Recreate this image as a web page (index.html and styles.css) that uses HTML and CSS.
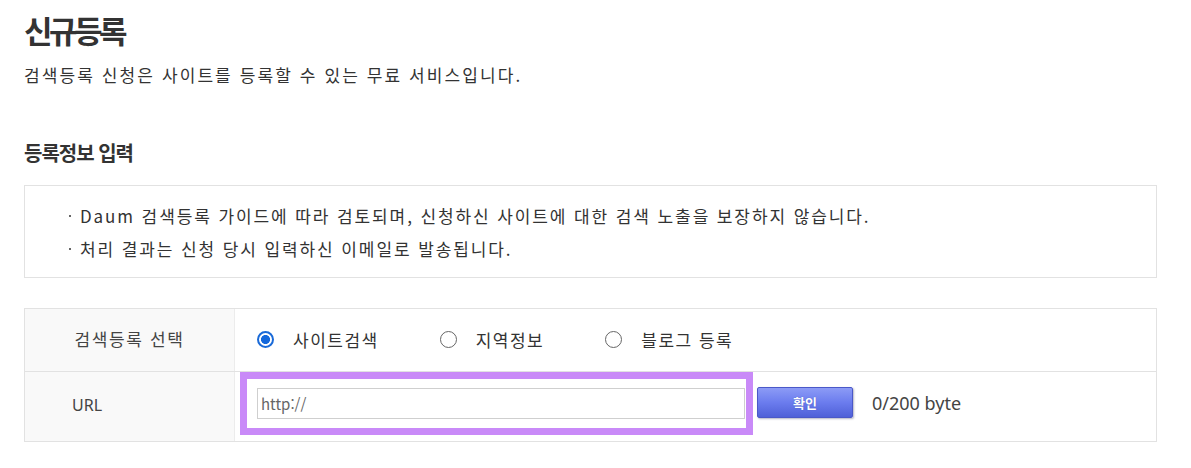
FILE: index.html
```html
<!DOCTYPE html>
<html lang="ko">
<head>
<meta charset="utf-8">
<title>신규등록</title>
<link rel="stylesheet" href="styles.css">
</head>
<body>
<div class="page">
  <h1 class="title">신규등록</h1>
  <p class="desc">검색등록 신청은 사이트를 등록할 수 있는 무료 서비스입니다.</p>
  <h2 class="section-title">등록정보 입력</h2>
  <ul class="notice">
    <li>Daum 검색등록 가이드에 따라 검토되며, 신청하신 사이트에 대한 검색 노출을 보장하지 않습니다.</li>
    <li>처리 결과는 신청 당시 입력하신 이메일로 발송됩니다.</li>
  </ul>
  <div class="form-table">
    <div class="row row-type">
      <div class="th th-center">검색등록 선택</div>
      <div class="td radios">
        <label class="opt"><span class="radio checked"></span><span class="opt-text">사이트검색</span></label>
        <label class="opt"><span class="radio"></span><span class="opt-text">지역정보</span></label>
        <label class="opt"><span class="radio"></span><span class="opt-text">블로그 등록</span></label>
      </div>
    </div>
    <div class="row row-url">
      <div class="th th-url">URL</div>
      <div class="td url-cell">
        <input class="url-input" type="text" value="http://">
        <button class="btn" type="button">확인</button>
        <span class="count">0/200 byte</span>
        <span class="highlight"></span>
      </div>
    </div>
  </div>
</div>
</body>
</html>
```

FILE: styles.css
```css
* { box-sizing: border-box; }

body {
  margin: 0;
  background: #fff;
  color: #333;
  font-family: "Noto Sans CJK KR", "Noto Sans", sans-serif;
}

.page {
  width: 1133px;
  margin-left: 24px;
}

.title {
  margin: 0;
  padding-top: 10px;
  font-size: 31px;
  line-height: 40px;
  font-weight: 700;
  letter-spacing: -3.5px;
  color: #333;
}

.desc {
  margin: 13px 0 0;
  font-size: 17px;
  line-height: 24px;
  letter-spacing: 2.1px;
  color: #333;
}

.section-title {
  margin: 53px 0 0;
  font-size: 20px;
  line-height: 26px;
  font-weight: 700;
  letter-spacing: -1px;
  color: #333;
}

.notice {
  list-style: none;
  margin: 19px 0 0;
  padding: 13px 0 12px;
  border: 1px solid #e2e2e2;
}

.notice li {
  display: flex;
  align-items: center;
  font-size: 17px;
  line-height: 33px;
  letter-spacing: 1.9px;
  color: #333;
}

.notice li::before {
  content: "";
  width: 2px;
  height: 2px;
  background: #666;
  margin-left: 44px;
  margin-right: 9px;
  flex: none;
}

.form-table {
  margin-top: 30px;
  border: 1px solid #e2e2e2;
}

.row {
  display: grid;
  grid-template-columns: 210px 1fr;
}

.row-type {
  height: 63px;
  border-bottom: 1px solid #e2e2e2;
}

.row-url {
  height: 69px;
}

.th {
  background: #f9f9f9;
  border-right: 1px solid #ececec;
  display: flex;
  align-items: center;
  font-size: 17px;
  letter-spacing: 1.6px;
  color: #444;
}

.th-center {
  justify-content: center;
  padding-bottom: 3px;
}

.th-url {
  padding-left: 47px;
  letter-spacing: 0;
  font-size: 16px;
  font-family: "Noto Sans", sans-serif;
  padding-bottom: 4px;
}

.td {
  display: flex;
  align-items: center;
  padding-left: 22px;
}

.radios {
  padding-bottom: 2px;
}

.opt {
  display: flex;
  align-items: center;
  margin-right: 61px;
}

.radio {
  width: 17px;
  height: 17px;
  border: 1px solid #666;
  border-radius: 50%;
  background: #fff;
  flex: none;
}

.radio.checked {
  border: 2px solid #1a6ad8;
  background: radial-gradient(circle, #1468dc 0 4.2px, #fff 4.8px);
}

.opt-text {
  margin-left: 19px;
  font-size: 17px;
  letter-spacing: 1.5px;
  color: #333;
}

.url-cell {
  position: relative;
  padding-bottom: 6px;
}

.url-input {
  width: 488px;
  height: 31px;
  border: 1px solid #cfcfcf;
  padding: 0 0 0 3px;
  margin: 0;
  font-family: "Noto Sans CJK KR", sans-serif;
  font-size: 15px;
  color: #666;
  background: #fff;
  outline: none;
}

.btn {
  margin: 0 0 2px 12px;
  width: 96px;
  height: 31px;
  border: 1px solid #4a58c8;
  border-radius: 2px;
  background: linear-gradient(#8c9bf6, #6b7cee 50%, #4f60d8);
  box-shadow: 1px 1px 2px rgba(40, 40, 90, 0.35);
  color: #fff;
  font-family: "Noto Sans CJK KR", sans-serif;
  font-size: 13px;
  font-weight: 700;
  text-shadow: 0 0 1px rgba(60, 70, 150, 0.6);
  padding: 0;
}

.count {
  margin-left: 19px;
  font-family: "Noto Sans", sans-serif;
  font-size: 18px;
  color: #444;
  padding-bottom: 2px;
}

.highlight {
  position: absolute;
  left: 5px;
  top: 0;
  width: 513px;
  height: 63px;
  border: 7px solid #c98af8;
  pointer-events: none;
}
```
